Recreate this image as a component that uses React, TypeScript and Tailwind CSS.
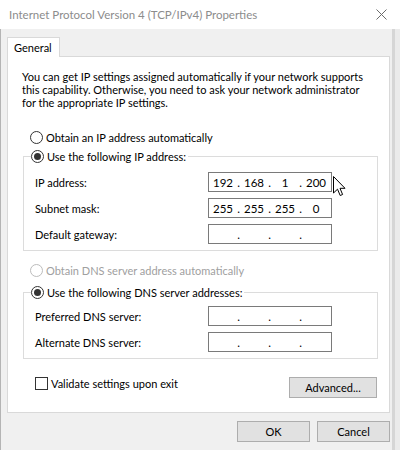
import React from 'react';

function Radio({ checked, disabled }: { checked?: boolean; disabled?: boolean }) {
  return (
    <span
      className={`w-[13px] h-[13px] rounded-full border flex items-center justify-center bg-white shrink-0 ${
        disabled ? 'border-[#bcbcbc]' : 'border-[#333333]'
      }`}
    >
      {checked && <span className="w-[7px] h-[7px] rounded-full bg-[#333333]" />}
    </span>
  );
}

function IpBox({ parts }: { parts?: string[] }) {
  const p = parts ?? ['', '', '', ''];
  return (
    <div className="w-[124px] h-[20px] border border-[#7a7a7a] bg-white flex items-center pl-[2px] text-[11.5px]">
      {p.map((seg, i) => (
        <React.Fragment key={i}>
          <span className="w-[24px] text-center">{seg}</span>
          {i < 3 && <span className="w-[7px] text-center">.</span>}
        </React.Fragment>
      ))}
    </div>
  );
}

function FieldRow({ label, parts }: { label: string; parts?: string[] }) {
  return (
    <div className="flex items-center h-[20px] pl-[11px]">
      <span className="w-[173px]">{label}</span>
      <IpBox parts={parts} />
    </div>
  );
}

function Button({ children, className }: { children: React.ReactNode; className: string }) {
  return (
    <div className={`h-[21px] bg-[#e1e1e1] border border-[#adadad] flex items-center justify-center ${className}`}>
      {children}
    </div>
  );
}

export default function App() {
  return (
    <div className="w-[400px] h-[450px] overflow-hidden flex flex-col bg-white font-['Lato',sans-serif] text-[11px] leading-[13px] text-black">
      {/* title bar */}
      <div className="h-[29px] shrink-0 flex items-center justify-between pl-[9px] pr-[13px] bg-white">
        <span className="text-[#8c8c8c] text-[11.5px] whitespace-nowrap">Internet Protocol Version 4 (TCP/IPv4) Properties</span>
        <svg width="11" height="11" viewBox="0 0 11 11">
          <path d="M0.5 0.5 L10.5 10.5 M10.5 0.5 L0.5 10.5" stroke="#6b6b6b" strokeWidth="1" />
        </svg>
      </div>

      <div className="flex flex-1">
        <div className="w-[392px] bg-[#f0f0f0] border-l border-[#b4b4b4] flex flex-col pl-[6px] pt-[8px] relative">
          {/* tab */}
          <div className="w-[53px] h-[20px] bg-white border border-b-0 border-[#d9d9d9] -mb-px relative z-10 flex items-center pl-[6px]">
            General
          </div>

          {/* panel */}
          <div className="w-[383px] h-[357px] bg-white border border-[#d9d9d9] flex flex-col">
            <p className="mt-[13px] ml-[14px] whitespace-nowrap">
              You can get IP settings assigned automatically if your network supports
              <br />
              this capability. Otherwise, you need to ask your network administrator
              <br />
              for the appropriate IP settings.
            </p>

            <div className="mt-[22px] ml-[22px] h-[13px] flex items-center gap-[3px]">
              <Radio />
              <span>Obtain an IP address automatically</span>
            </div>

            <div className="mt-[12px] ml-[15px] w-[355px] border border-[#dcdcdc] flex flex-col pb-[6px]">
              <div className="-mt-[7px] ml-[7px] h-[13px] w-fit bg-white pr-[2px] flex items-center gap-[3px]">
                <Radio checked />
                <span>Use the following IP address:</span>
              </div>
              <div className="mt-[9px] flex flex-col gap-[6px]">
                <FieldRow label="IP address:" parts={['192', '168', '1', '200']} />
                <FieldRow label="Subnet mask:" parts={['255', '255', '255', '0']} />
                <FieldRow label="Default gateway:" />
              </div>
            </div>

            <div className="mt-[13px] ml-[22px] h-[13px] flex items-center gap-[3px] text-[#a0a0a0]">
              <Radio disabled />
              <span>Obtain DNS server address automatically</span>
            </div>

            <div className="mt-[15px] ml-[15px] w-[355px] border border-[#dcdcdc] flex flex-col pb-[6px]">
              <div className="-mt-[7px] ml-[7px] h-[13px] w-fit bg-white pr-[2px] flex items-center gap-[3px]">
                <Radio checked />
                <span>Use the following DNS server addresses:</span>
              </div>
              <div className="mt-[7px] flex flex-col gap-[6px]">
                <FieldRow label="Preferred DNS server:" />
                <FieldRow label="Alternate DNS server:" />
              </div>
            </div>

            <div className="mt-[18px] flex items-start justify-between pl-[27px] pr-[12px]">
              <div className="h-[13px] flex items-center gap-[3px] mt-0">
                <span className="w-[13px] h-[13px] border border-[#333333] bg-white" />
                <span>Validate settings upon exit</span>
              </div>
              <Button className="w-[88px]">Advanced...</Button>
            </div>
          </div>

          {/* footer */}
          <div className="mt-[8px] flex justify-end gap-[7px] pr-[2px]">
            <Button className="w-[73px]">OK</Button>
            <Button className="w-[73px]">Cancel</Button>
          </div>

          {/* mouse pointer */}
          <svg className="absolute left-[332px] top-[147px]" width="13" height="21" viewBox="0 0 13 21">
            <path
              d="M0.5 0.5 L0.5 17 L4.5 13.2 L7.2 19.5 L9.6 18.5 L7 12.3 L12 12.3 Z"
              fill="#ffffff"
              stroke="#000000"
              strokeWidth="1"
              strokeLinejoin="miter"
            />
          </svg>
        </div>
        <div className="w-[3px] bg-[#d6d6d6]" />
        <div className="flex-1 bg-[#ebebeb]" />
      </div>
    </div>
  );
}
